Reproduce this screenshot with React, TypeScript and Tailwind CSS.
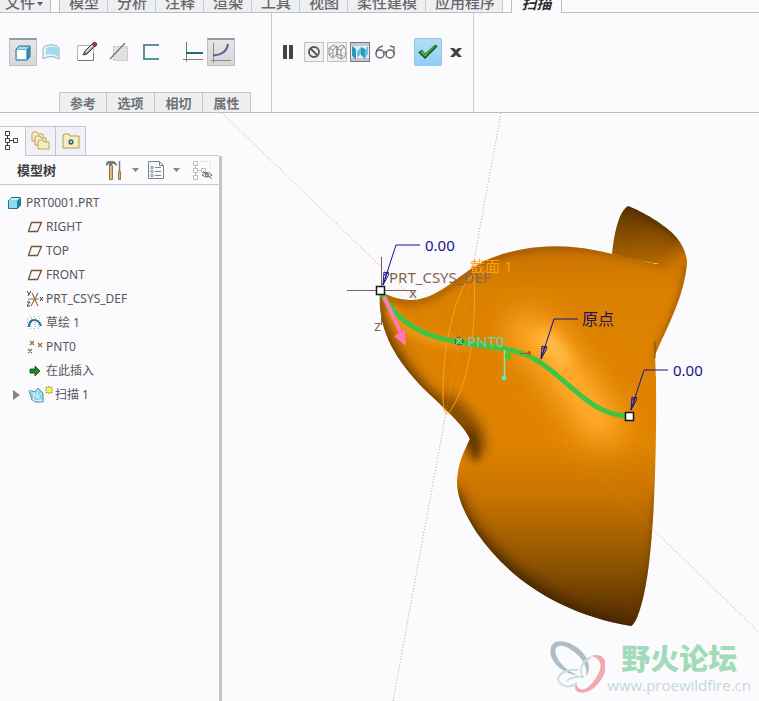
import React from "react";
import type { ReactNode } from "react";

const CJK = "font-['Noto_Sans_CJK_SC',sans-serif]";
const UI = "font-['Noto_Sans','Noto_Sans_CJK_SC',sans-serif]";

const menuTabs = ["模型", "分析", "注释", "渲染", "工具", "视图", "柔性建模", "应用程序"];
const panelTabs = ["参考", "选项", "相切", "属性"];

function Svg({ w, h, children }: { w: number; h: number; children: ReactNode }) {
  return (
    <svg width={w} height={h} viewBox={`0 0 ${w} ${h}`} fill="none" className="block shrink-0" aria-hidden="true">
      {children}
    </svg>
  );
}

function ToolButton({ label, className = "", pressed = false, children }: { label: string; className?: string; pressed?: boolean; children: ReactNode }) {
  const look = pressed ? "border border-t-2 border-[#c0c0c4] border-t-[#9a9a9e] bg-linear-to-b from-[#e6e6e8] to-[#d6d6d9]" : "";
  return (
    <button type="button" aria-label={label} aria-pressed={pressed} className={`flex size-7 shrink-0 items-center justify-center ${look} ${className}`}>
      {children}
    </button>
  );
}

function SmallButton({ label, className = "", pressed = false, children }: { label: string; className?: string; pressed?: boolean; children: ReactNode }) {
  const look = pressed ? "border-[#77777b] bg-[#c9c5cb]" : "border-[#c2c2c5] bg-[#f1f1f2]";
  return (
    <button type="button" aria-label={label} aria-pressed={pressed} className={`flex size-5 shrink-0 items-center justify-center border ${look} ${className}`}>
      {children}
    </button>
  );
}

function MenuBar() {
  return (
    <nav className={`flex h-[13px] text-[15px] leading-4 font-medium text-[#68686c] ${CJK}`}>
      <button type="button" className="flex w-[51px] shrink-0 items-end gap-0.5 border-r border-b border-[#bcbec2] bg-[#eeeff1] pb-0.5 pl-[5px]">
        文件
        <span className="mb-1 flex">
          <Svg w={6} h={4}><path d="M0 0h6L3 4z" fill="#5c5c60" /></Svg>
        </span>
      </button>
      <span className="w-2 shrink-0 border-b border-[#bcbec2]" />
      <div className="flex shrink-0 border-l border-[#bcbec2]">
        {menuTabs.map((t) => (
          <button key={t} type="button" className="flex items-end border-r border-b border-[#c8cace] border-b-[#bcbec2] bg-[#eeeff1] px-[9px] pb-0.5 whitespace-nowrap last:pr-2">
            <span className="-mr-px">{t}</span>
          </button>
        ))}
      </div>
      <span className="w-2 shrink-0 border-b border-[#bcbec2]" />
      <button type="button" className="flex w-[51px] shrink-0 items-end justify-center border-x border-[#bcbec2] pb-0.5 font-bold text-[#2e2e30] italic">扫描</button>
      <span className="grow border-b border-[#bcbec2]" />
    </nav>
  );
}

function Ribbon() {
  return (
    <section className="flex h-[100px] border-b border-[#bcbec2]">
      <div className="flex w-[272px] shrink-0 flex-col justify-between border-r border-[#c9cbd0] pt-[25px]">
        <div className="flex pl-[9px]">
          <ToolButton label="实体" pressed>
            <Svg w={18} h={18}>
              <path d="M2 5l3-3h11v11l-3 3H2z" fill="#9fdaf0" stroke="#1c6d88" />
              <path d="M2.500 5.500h10v10h-10z" fill="#fdfeff" stroke="#5ab4cf" />
              <path d="M13 5l3-3v11l-3 3z" fill="#2f8ba8" />
            </Svg>
          </ToolButton>
          <ToolButton label="曲面">
            <Svg w={18} h={18}>
              <path d="M3 3Q9 0 15 3l2 2v11Q9 11 1 16V5z" fill="#e6f6fa" stroke="#8fb2bf" />
              <path d="M4 5Q9 2 16 5v8Q10 10 4 12z" fill="#a4d9ea" />
            </Svg>
          </ToolButton>
          <ToolButton label="草绘" className="ml-2">
            <Svg w={22} h={22}>
              <path d="M1.500 4.500h16v15h-16z" fill="#fff" stroke="#b5b5b9" />
              <path d="M17.500 12v7.500H2" stroke="#77777a" />
              <path d="M7 14l2-4 7-7 3 2-8 8z" fill="#8d8885" stroke="#3f3b3b" />
              <path d="M10 11l7-7" stroke="#ece9e6" strokeWidth="1.500" />
              <path d="M16 3l2-2q3 0 3 3l-2 2z" fill="#a33a3a" stroke="#6b2323" strokeWidth="0.600" />
            </Svg>
          </ToolButton>
          <ToolButton label="移除材料" className="ml-1">
            <Svg w={20} h={20}>
              <path d="M4.500 4.500h14v14h-14z" fill="#e0e0e2" stroke="#bcbcbf" strokeDasharray="2 1" />
              <path d="M1 17L16 1" stroke="#77777a" strokeWidth="1.300" />
            </Svg>
          </ToolButton>
          <ToolButton label="薄板" className="ml-1">
            <Svg w={18} h={18}>
              <path d="M17 2H2v14h15" stroke="#2d6d82" strokeWidth="1.500" />
            </Svg>
          </ToolButton>
          <ToolButton label="恒定截面" className="ml-3.5">
            <Svg w={20} h={22}>
              <path d="M3.500 1v20M0 18.500h20" stroke="#927f6c" />
              <path d="M3.500 1v15" stroke="#657b80" />
              <path d="M3 12h17" stroke="#236f78" strokeWidth="2" />
            </Svg>
          </ToolButton>
          <ToolButton label="可变截面" pressed>
            <Svg w={22} h={22}>
              <path d="M3.500 1v20M1 18.500h20" stroke="#8b8b8e" />
              <path d="M3 13C11 14 17 9 18 2" stroke="#76519c" strokeWidth="2" />
            </Svg>
          </ToolButton>
        </div>
        <div className={`flex pl-[59px] text-[13px] font-bold text-[#707075] ${CJK}`}>
          {panelTabs.map((t) => (
            <button key={t} type="button" className="h-5 w-12 border-t border-r border-[#c4c6ca] bg-[#eeeff1] leading-[18px] first:border-l">{t}</button>
          ))}
        </div>
      </div>
      <div className="flex w-[202px] shrink-0 border-r border-[#c9cbd0] pt-[25px] pl-0.5">
        <div className="flex h-7 items-center">
          <ToolButton label="暂停">
            <Svg w={12} h={14}><path d="M1 0h4v14H1zM7 0h4v14H7z" fill="#454548" /></Svg>
          </ToolButton>
          <SmallButton label="无预览" className="ml-0.5">
            <Svg w={14} h={14}>
              <circle cx="7" cy="7" r="5" stroke="#555558" strokeWidth="1.800" />
              <path d="M3.500 3.500l7 7" stroke="#555558" strokeWidth="1.800" />
            </Svg>
          </SmallButton>
          <SmallButton label="分离预览" className="ml-[3px]">
            <Svg w={18} h={18}>
              <path d="M1 5l5-3 3 3M1 5l4 2v8l-4-3zM5 7l4-4v8l-4 4M9 6l4-4 3 1-3 4-4-1v8l4 2V7M16 3l2 4-1 7-4 2M1 12l3-2M9 11l6 2" stroke="#77777a" strokeWidth="0.800" />
            </Svg>
          </SmallButton>
          <SmallButton label="连接预览" pressed className="ml-[3px]">
            <Svg w={18} h={18}>
              <path d="M0 3h18v12H0z" fill="#dfeef2" />
              <path d="M1 3l4 3v11l-4-4zM10 4l4 2v10l-4-4z" fill="#2b99bf" />
              <path d="M5 7l5-4v9l-5 4z" fill="#fafdfe" />
              <path d="M6 8l4-4v7l-4 4zM14 7l3-4v8l-3 4z" fill="#66c3df" />
            </Svg>
          </SmallButton>
          <button type="button" aria-label="特征预览" className="ml-[3px] flex size-6 shrink-0 items-center justify-center">
            <Svg w={20} h={14}>
              <circle cx="5" cy="9" r="4" stroke="#66666a" strokeWidth="1.500" />
              <circle cx="15" cy="9" r="4" stroke="#66666a" strokeWidth="1.500" />
              <path d="M1 8Q2 2 8 1M19 9V2l-4-1M8 8q2-2 4 0" stroke="#66666a" strokeWidth="1.300" />
            </Svg>
          </button>
          <button type="button" aria-label="确定" className="ml-[17px] flex size-7 shrink-0 items-center justify-center rounded-xs border border-[#91c6e4] bg-linear-to-b from-[#b5ddf3] to-[#8ed0f5]">
            <Svg w={22} h={18}>
              <path d="M2 9l3-2 3 4L18 2l2 1L8 15z" fill="#46b542" stroke="#1c6226" strokeWidth="0.800" />
              <path d="M2 9l6 6L20 3" stroke="#164b1d" strokeWidth="1.500" />
            </Svg>
          </button>
          <ToolButton label="取消">
            <Svg w={14} h={12}><path d="M1 2h4l2 2 2-2h4L9 6.500l4 4.500H9L7 9l-2 2H1l4-4.500z" fill="#454548" /></Svg>
          </ToolButton>
        </div>
      </div>
    </section>
  );
}

function Folder({ x, y }: { x: number; y: number }) {
  return <path d={`M${x} ${y + 2}l1-2h4l1 2h5v7h-11z`} fill="#f9ecbd" stroke="#b9a36a" />;
}

function Plane() {
  return <Svg w={16} h={14}><path d="M4.500 2.500h10l-4 9h-9z" stroke="#765638" strokeWidth="1.300" /></Svg>;
}

const nodes: { name: string; icon: ReactNode }[] = [
  { name: "RIGHT", icon: <Plane /> },
  { name: "TOP", icon: <Plane /> },
  { name: "FRONT", icon: <Plane /> },
  {
    name: "PRT_CSYS_DEF",
    icon: (
      <Svg w={16} h={18}>
        <path d="M1 9h11M4 16l7-13M5 3l6 13" stroke="#967044" strokeWidth="1.200" />
        <path d="M0 1l2 3M4 1L1 6M0 12h3l-3 4h3M13 7l3 4M16 7l-3 4" stroke="#3c3734" />
      </Svg>
    ),
  },
  {
    name: "草绘 1",
    icon: (
      <Svg w={16} h={16}>
        <path d="M0 3.500h15M0 7.500h15M0 11.500h15M3.500 1v13M7.500 1v13M11.500 1v13" stroke="#90b3c6" strokeDasharray="1 3" />
        <path d="M2 12Q2 5 7 5t7 6" stroke="#2c7795" strokeWidth="2" />
      </Svg>
    ),
  },
  {
    name: "PNT0",
    icon: <Svg w={16} h={16}><path d="M3 2l4 4M7 2L3 6M11 4l4 4M15 4l-4 4M1 10l4 4M5 10l-4 4" stroke="#8a6a45" strokeWidth="1.200" /></Svg>,
  },
  {
    name: "在此插入",
    icon: <Svg w={16} h={12}><path d="M3 4h5V1l5 5-5 5V8H3z" fill="#1f8b22" stroke="#0b4b10" strokeWidth="0.800" /></Svg>,
  },
];

function ModelTree() {
  return (
    <aside className="flex w-[222px] shrink-0 flex-col pt-[13px]">
      <div className="flex h-[30px] pr-[3px]">
        <button type="button" aria-label="模型树" className="flex w-[26px] shrink-0 items-center border-t border-r border-[#c3c5cc] pl-1 pb-1">
          <Svg w={16} h={20}>
            <path d="M1.500 1.500h4v4h-4zM1.500 8.500h4v4h-4zM1.500 15.500h4v4h-4zM9.500 8.500h4v4h-4zM3.500 6v2M3.500 13v2M6 10.500h3" stroke="#3f3f42" />
          </Svg>
        </button>
        <button type="button" aria-label="文件夹浏览器" className="flex w-[30px] shrink-0 items-center justify-center border-t border-r border-b border-[#c3c5cc] bg-[#f0f1f4]">
          <Svg w={20} h={20}><Folder x={1} y={1} /><Folder x={4} y={5} /><Folder x={7} y={9} /></Svg>
        </button>
        <button type="button" aria-label="收藏夹" className="flex w-[30px] shrink-0 items-center justify-center border-t border-r border-b border-[#c3c5cc] bg-[#f0f1f4]">
          <Svg w={18} h={16}>
            <path d="M1 3l1-2h5l1 2h9v12H1z" fill="#f9ecbd" stroke="#b39a5b" />
            <path d="M9 6v6M6 9h6M7 7l4 4M11 7l-4 4" stroke="#275d70" strokeWidth="1.200" />
            <circle cx="9" cy="9" r="1" fill="#e8f4f6" />
          </Svg>
        </button>
        <span className="grow border-b border-[#c3c5cc]" />
      </div>
      <div className="grow border-r-[3px] border-[#c5c5c8]">
        <header className="flex h-[29px] items-center border-b border-[#c8c9ce] pl-[17px]">
          <h2 className={`text-[13px] leading-5 font-bold text-[#3e3e41] ${CJK}`}>模型树</h2>
          <button type="button" aria-label="设置" className="ml-12 flex shrink-0 items-center gap-2">
            <Svg w={20} h={20}>
              <path d="M2 3l2-2h6l3 3v2l-3-2H8v2H5V4L2 6z" fill="#7b7b7f" />
              <path d="M5.500 5.500h3v14h-3z" fill="#dcbb78" stroke="#95753c" />
              <path d="M15.500 1v10" stroke="#7c7c80" strokeWidth="1.500" />
              <path d="M14.500 11.500h2v8h-2z" fill="#dcbb78" stroke="#95753c" />
            </Svg>
            <Svg w={7} h={4}><path d="M0 0h7L3.500 4z" fill="#858588" /></Svg>
          </button>
          <button type="button" aria-label="显示" className="ml-2 flex shrink-0 items-center gap-2">
            <Svg w={18} h={20}>
              <path d="M1.500 1.500h11l4 4v13h-15z" fill="#f5f7f9" stroke="#7d8388" />
              <path d="M12.500 1.500v4h4M8 7.500h6M8 11.500h6M8 15.500h6" stroke="#7d8388" />
              <path d="M4 6.500h2v2H4zM4 10.500h2v2H4zM4 14.500h2v2H4z" stroke="#6b8796" strokeWidth="0.800" />
            </Svg>
            <Svg w={7} h={4}><path d="M0 0h7L3.500 4z" fill="#858588" /></Svg>
          </button>
          <button type="button" aria-label="隐藏" className="ml-3 shrink-0">
            <Svg w={22} h={20}>
              <path d="M1.500 1.500h4v4h-4zM1.500 8.500h4v4h-4zM1.500 15.500h4v4h-4zM9.500 8.500h4v4h-4zM3.500 6v2M3.500 13v2M6 10.500h3" stroke="#bcbcbf" />
              <path d="M9 1.500h9v8" stroke="#c8c8cb" strokeDasharray="1 2" />
              <path d="M10 15q5-5 10 0-5 4-10 0zM11 11l9 8" stroke="#717174" />
              <circle cx="15" cy="15" r="1.500" stroke="#717174" />
            </Svg>
          </button>
        </header>
        <ul className={`pt-1.5 text-[12px] leading-6 text-[#55555a] ${UI}`}>
          <li className="flex h-6 items-center gap-1 pl-[7px]">
            <Svg w={15} h={14}>
              <path d="M1.500 4.500l3-3h9v8l-3 3h-9z" fill="#8adaf5" stroke="#266f8c" />
              <path d="M10 5l3-3v8l-3 3z" fill="#2580a2" />
              <path d="M2 4h8l3-2H5z" fill="#c8f1fc" />
            </Svg>
            PRT0001.PRT
          </li>
          {nodes.map((n) => (
            <li key={n.name} className="flex h-6 items-center gap-[3px] pl-[27px]">{n.icon}{n.name}</li>
          ))}
          <li className="flex h-6 items-center pl-3">
            <button type="button" aria-label="展开" className="mr-2 shrink-0">
              <Svg w={8} h={10}><path d="M1 0l7 5-7 5z" fill="#858588" /></Svg>
            </button>
            <Svg w={26} h={20}>
              <path d="M1 5l6 2 3-4 5 5v9H8L4 15z" fill="#8ad3ea" stroke="#4d93ab" />
              <path d="M7 7l-2 8 9 1M1 5l13 11M10 4l-1 9 5-5" stroke="#e2f7fc" />
              <path d="M21 1v8M17 5h8M18 2l6 6M24 2l-6 6" stroke="#8a8726" strokeWidth="1.200" />
              <circle cx="21" cy="5" r="2.500" fill="#fcf43c" />
            </Svg>
            <span className="ml-px">扫描 1</span>
          </li>
        </ul>
      </div>
    </aside>
  );
}

const BODY =
  "M380 291C392 298 402 300 413 300C440 298 456 276 484 261C528 242 570 243 612 254L656 264L687 263C684 297 668 325 655 355L656 380C657 480 652 560 644 594C640 612 635 625 631 626C560 614 508 578 477 533C460 507 457 492 457 481C458 462 464 452 470 439C464 424 436 401 423 388C394 358 377 328 380 291Z";
const EAR = "M612 254C614 233 619 211 628 206C641 211 665 224 677 238C684 247 687 256 687 265C681 266 663 267 612 254Z";

function Leader({ x, y, w }: { x: number; y: number; w: number }) {
  return (
    <g stroke="#17108c" fill="none">
      <path d={`M${x} ${y}l13-40h${w}`} />
      <path d={`M${x} ${y}l1-13 5 2zM${x + 1} ${y - 10}l5-3M${x + 2} ${y - 6}l2-7`} />
    </g>
  );
}

function Viewport() {
  return (
    <main className="relative min-w-0 grow overflow-hidden">
      <svg viewBox="222 113 537 588" preserveAspectRatio="xMinYMin meet" className="block w-full" role="img" aria-label="PRT0001">
        <defs>
          <linearGradient id="body" x1="0" y1="245" x2="0" y2="626" gradientUnits="userSpaceOnUse">
            <stop offset="0" stopColor="#c87200" />
            <stop offset="0.120" stopColor="#dc8000" />
            <stop offset="0.520" stopColor="#e08400" />
            <stop offset="0.660" stopColor="#c87400" />
            <stop offset="0.850" stopColor="#8a5100" />
            <stop offset="1" stopColor="#4f2b00" />
          </linearGradient>
          <linearGradient id="ear" x1="640" y1="208" x2="642" y2="268" gradientUnits="userSpaceOnUse">
            <stop offset="0" stopColor="#5b3500" />
            <stop offset="0.500" stopColor="#8c5000" />
            <stop offset="1" stopColor="#b86a00" />
          </linearGradient>
          <clipPath id="bodyClip"><path d={BODY} /></clipPath>
          <clipPath id="earClip"><path d={EAR} /></clipPath>
          <filter id="fine" x="340" y="180" width="380" height="480" filterUnits="userSpaceOnUse"><feGaussianBlur stdDeviation="4" /></filter>
          <filter id="soft" x="340" y="180" width="380" height="480" filterUnits="userSpaceOnUse"><feGaussianBlur stdDeviation="7" /></filter>
          <filter id="wide" x="340" y="180" width="380" height="480" filterUnits="userSpaceOnUse"><feGaussianBlur stdDeviation="14" /></filter>
        </defs>
        <path d="M222 113L759 632M501 113L393 701" stroke="#e08bad" strokeDasharray="1 2" />
        <path d={BODY} fill="url(#body)" />
        <g clipPath="url(#bodyClip)" fill="none">
          <path d="M372 300C373 332 392 364 420 394C445 416 460 426 470 442" stroke="#4b2b00" strokeWidth="18" filter="url(#soft)" />
          <path d="M440 402C462 416 475 432 476 452" stroke="#8a5000" strokeWidth="22" filter="url(#soft)" />
          <path d="M466 430C474 438 477 447 475 460" stroke="#4b2b00" strokeWidth="7" filter="url(#fine)" />
          <path d="M386 294C400 306 420 303 438 293L490 258Q545 239 615 252L670 263" stroke="#744300" strokeWidth="4" filter="url(#fine)" />
          <path d="M450 490C460 535 520 605 631 634" stroke="#3f2200" strokeWidth="16" filter="url(#soft)" />
          <path d="M390 308C404 334 430 342 466 344" stroke="#ffac2d" strokeWidth="5" filter="url(#fine)" />
          <path d="M528 334C552 344 568 385 602 424" stroke="#ffa626" strokeWidth="46" strokeLinecap="round" filter="url(#wide)" />
          <path d="M546 340C560 356 570 385 596 418" stroke="#ffac30" strokeWidth="20" strokeLinecap="round" strokeOpacity="0.700" filter="url(#soft)" />
          <path d="M545 338L562 358" stroke="#ffc450" strokeWidth="12" strokeLinecap="round" filter="url(#soft)" />
          <path d="M690 262C686 302 665 335 659 360" stroke="#7a4700" strokeWidth="6" filter="url(#fine)" />
          <path d="M659 490Q653 592 637 626" stroke="#5a3300" strokeWidth="5" filter="url(#fine)" />
        </g>
        <path d={EAR} fill="url(#ear)" />
        <g clipPath="url(#earClip)" fill="none">
          <path d="M690 250Q684 268 662 272" stroke="#d67c00" strokeWidth="12" filter="url(#soft)" />
          <path d="M628 204C645 212 668 224 680 238" stroke="#4b2b00" strokeWidth="6" filter="url(#fine)" />
        </g>
        <path d="M222 113L759 632M501 113L393 701" stroke="#ff9a5c" strokeOpacity="0.650" strokeDasharray="1 2" clipPath="url(#bodyClip)" />
        <path d="M655 341v17" stroke="#754817" />
        <path d="M347 290.500h68M381.500 257v68" stroke="#806047" />
        <path d="M474 275C459 281 442 340 443 398Q444 424 453 406C468 384 477 330 474 275Z" stroke="#ffa015" fill="none" />
        <path d="M382 293C397 324 428 338 459 342C491 348 519 347 541 363C572 384 591 415 629 416" stroke="#40c443" strokeWidth="5" fill="none" />
        <path d="M384 297l17 36" stroke="#ff79ba" strokeWidth="4" />
        <path d="M394 336l11-6 1 16z" fill="#ff79ba" />
        <Leader x={383} y={285} w={24} />
        <Leader x={541} y={359} w={24} />
        <Leader x={631} y={410} w={24} />
        <path d="M504.500 350v28" stroke="#86e7b6" strokeWidth="1.500" />
        <circle cx="504" cy="378" r="2.500" fill="#5ce8c6" />
        <circle cx="508" cy="356" r="3" fill="#26db1d" />
        <path d="M520 353.500h9" stroke="#d8401a" />
        <circle cx="529" cy="353" r="2" fill="#ef3a22" />
        <path d="M376.500 286.500h8v8h-8zM625.500 412.500h8v8h-8z" fill="#fff" stroke="#171717" strokeWidth="1.500" />
        <circle cx="459" cy="341" r="4" stroke="#263744" strokeDasharray="2 1" fill="none" />
        <path d="M456 338l6 6M462 338l-6 6" stroke="#67ddd2" />
        <g className={UI} fontSize="15">
          <text x="389" y="283" fill="#85664c">PRT_CSYS_DEF</text>
          <text x="409" y="298" fill="#7c6a5d">x</text>
          <text x="374" y="331" fill="#7c6a5d">z</text>
          <text x="470" y="272" fill="#ff9c15">截面 1</text>
          <text x="467" y="347" fill="#69d5b6">PNT0</text>
          <text x="425" y="251" fill="#17108c">0.00</text>
          <text x="582" y="325" fontSize="16" fill="#25135f">原点</text>
          <text x="673" y="376" fill="#17108c">0.00</text>
        </g>
      </svg>
      <div className="absolute right-2 bottom-1 flex items-center gap-0.5">
        <Svg w={56} h={58}>
          <path fillRule="evenodd" d="M2 17C-2-2 17-1 30 10C41 19 42 32 37 37C39 27 33 19 24 12C12 3 4 6 7 16C10 24 18 32 30 37C14 34 5 26 2 17Z" fill="#aebbc9" />
          <path d="M42 17C60 11 61 33 48 46C37 58 22 55 27 44C31 57 41 48 46 40C54 29 54 20 42 17Z" fill="#f0aab0" />
          <path d="M34 38C29 30 34 22 42 18M29 31C14 29 5 39 11 44C16 49 24 48 28 44M18 42Q22 37 35 38" stroke="#cbdeda" strokeWidth="2" />
        </Svg>
        <div className="flex flex-col items-center gap-0.5">
          <span className={`text-[29px] leading-8 font-black text-[#a3dbba] ${CJK}`}>野火论坛</span>
          <span className="font-['Open_Sans',sans-serif] text-[15px] leading-5 text-[#c3d8da]">www.proewildfire.cn</span>
        </div>
      </div>
    </main>
  );
}

export default function App() {
  return (
    <div className="flex min-h-screen flex-col overflow-hidden bg-[#fbfbfe]">
      <MenuBar />
      <Ribbon />
      <div className="flex grow">
        <ModelTree />
        <Viewport />
      </div>
    </div>
  );
}
